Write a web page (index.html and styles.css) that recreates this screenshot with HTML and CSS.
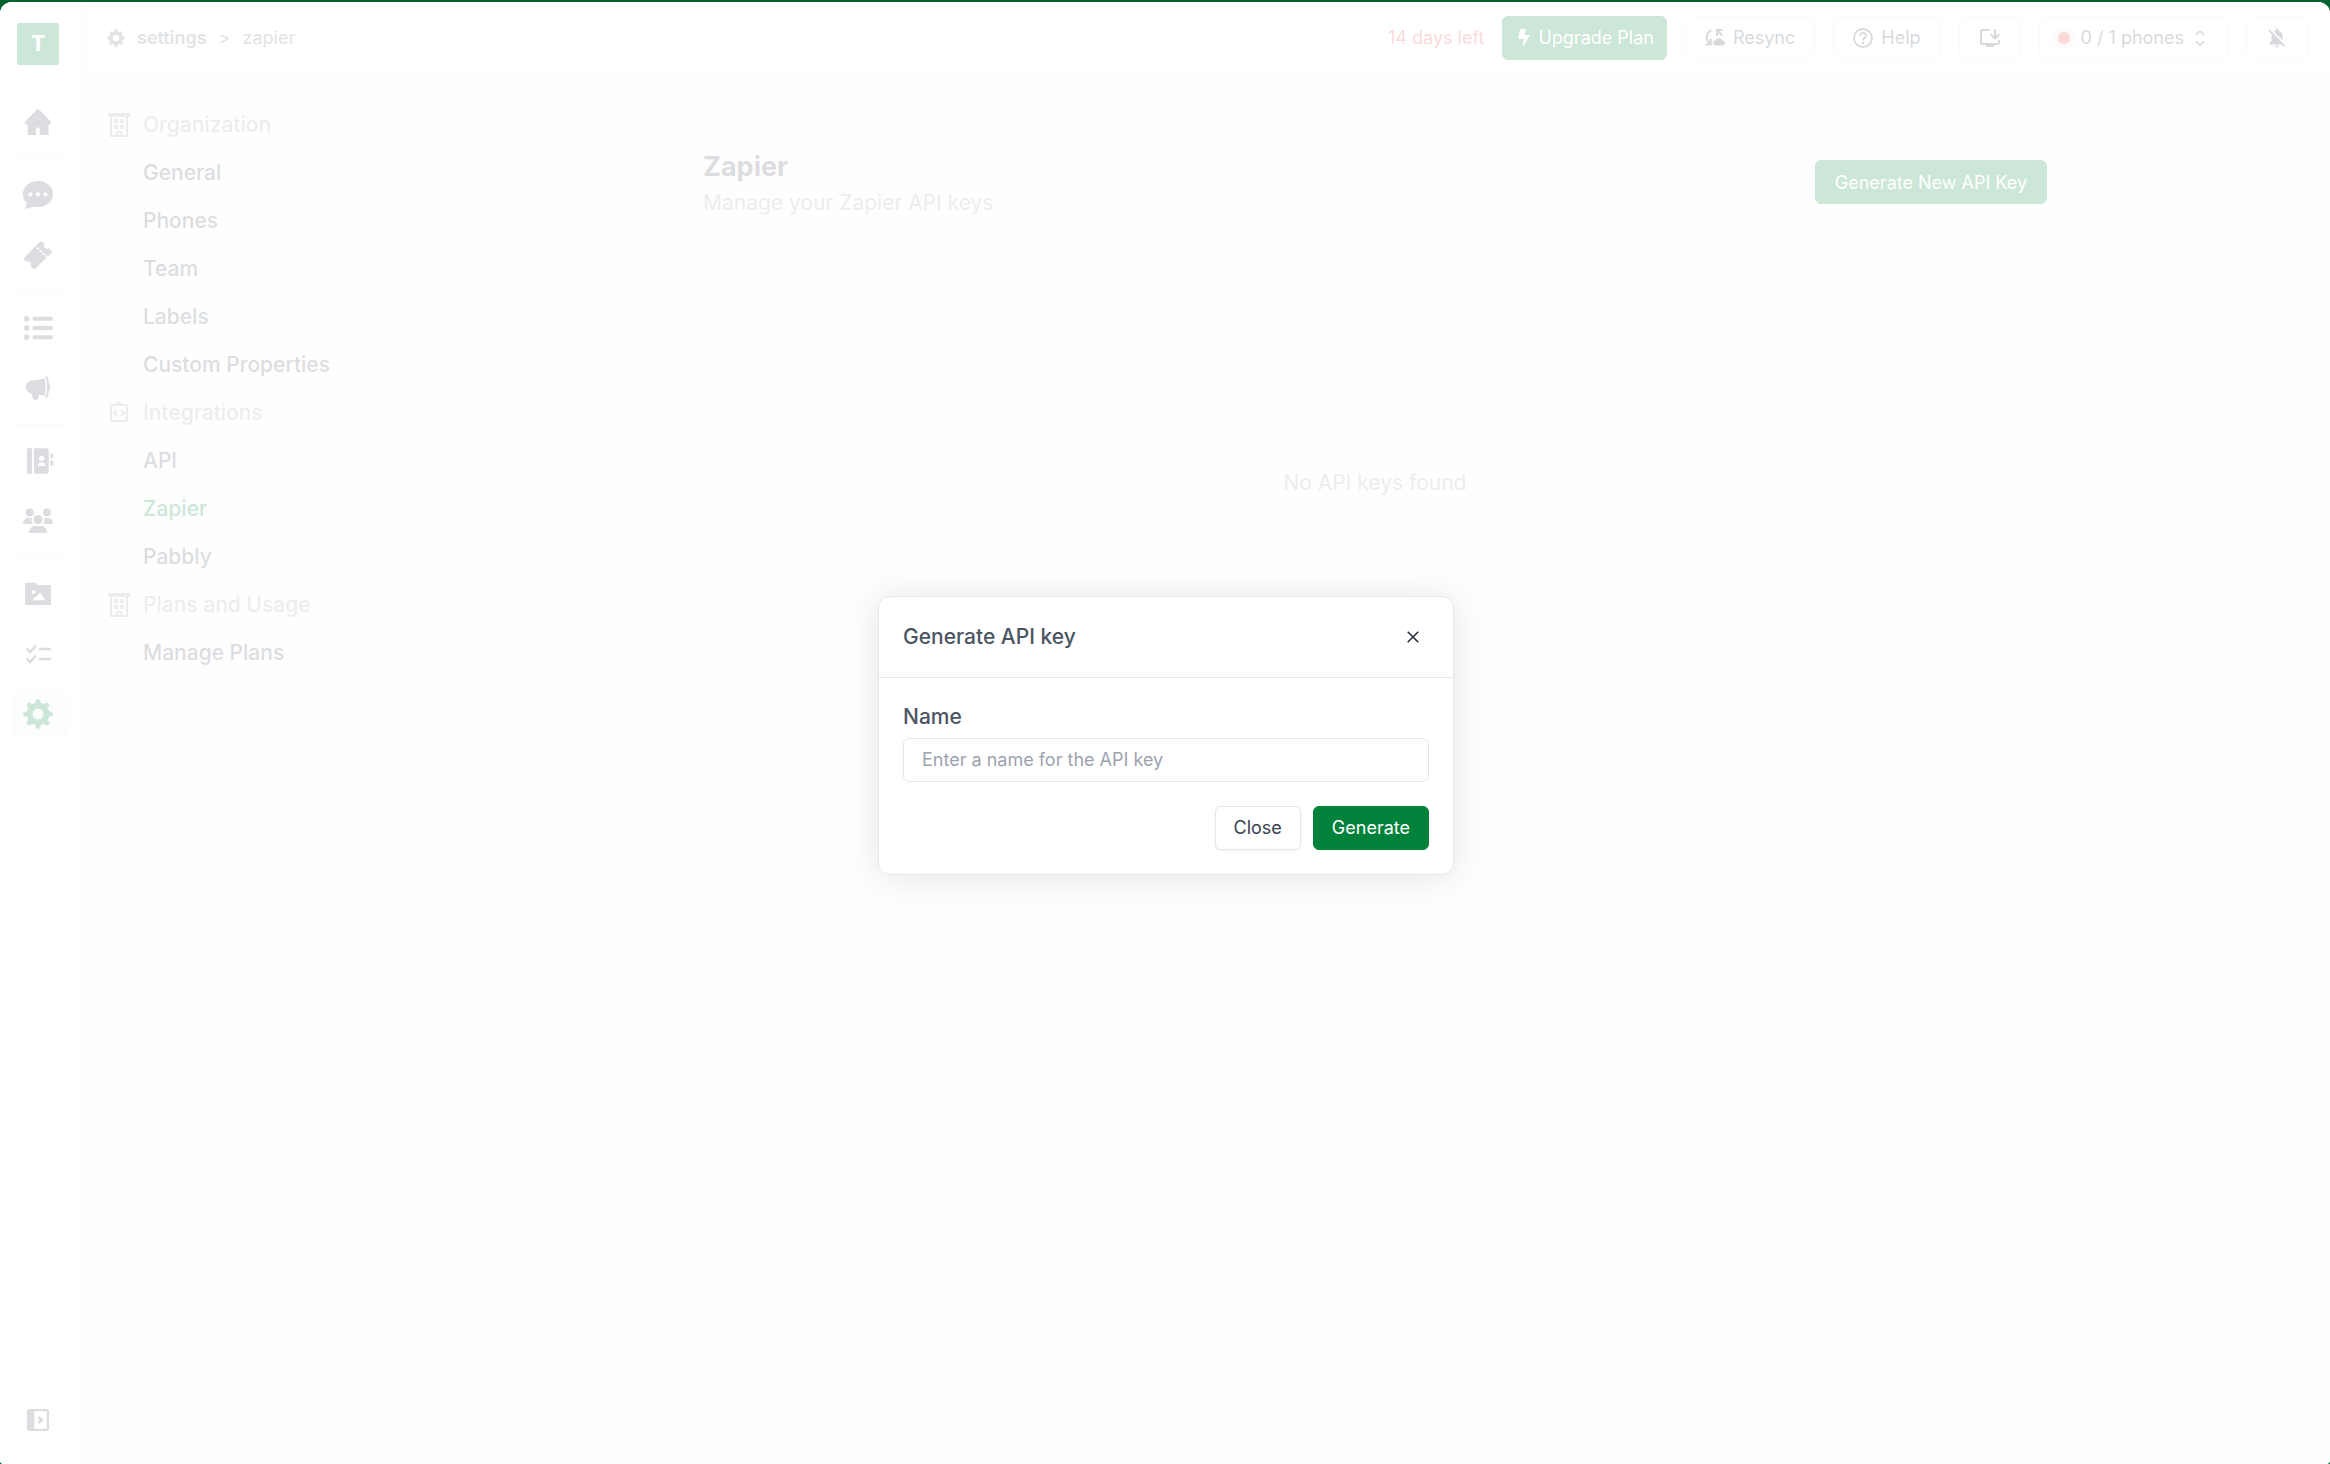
FILE: index.html
```html
<!DOCTYPE html>
<html lang="en">
<head>
    <meta charset="UTF-8">
    <meta name="viewport" content="width=device-width, initial-scale=1.0">
    <title>Zapier - Settings</title>
    <link rel="stylesheet" href="styles.css">
</head>
<body>
    <!-- shared icons -->
    <svg class="sprite" aria-hidden="true">
        <symbol id="gear" viewBox="0 0 30 30">
            <circle cx="15" cy="15" r="8.400" fill="none" stroke="currentColor" stroke-width="5.800"/>
            <path d="M15 2.7V6M15 27.3V24M2.7 15H6M27.3 15H24M6.3 6.3l2 2M23.7 6.3l-2 2M6.3 23.7l2-2M23.7 23.7l-2-2" stroke="currentColor" stroke-width="5" stroke-linecap="round"/>
        </symbol>
        <symbol id="building" viewBox="0 0 24 24">
            <path fill="currentColor" fill-rule="evenodd" d="M1 0h22v4h-2v20H3V4H1zM5 4v18h4v-4h6v4h4V4zM7 6h4v4H7zM13 6h4v4h-4zM7 12h4v4H7zM13 12h4v4h-4zM11 20v2h2v-2z"/>
        </symbol>
    </svg>

    <div class="app">
        <aside class="sidebar">
            <a href="#" class="logo">T</a>
            <nav class="menu" aria-label="Main">
                <a href="#" class="menu-item" aria-label="Home">
                    <svg class="menu-icon" viewBox="0 0 30 30"><path fill="currentColor" d="M14 2.6a1.5 1.5 0 0 1 2 0l11.6 11.6c.8.8.4 3.2-1 3.2h-1.1v9.8a.8.8 0 0 1-.8.8h-8V22a1.7 1.7 0 0 0-3.6 0v6H5.5a.8.8 0 0 1-.8-.8v-9.8H3.4c-1.4 0-1.8-2.4-1-3.2z"/></svg>
                </a>
                <hr class="divider">
                <a href="#" class="menu-item" aria-label="Chats">
                    <svg class="menu-icon" viewBox="0 0 30 30"><g transform="translate(0 1)"><path fill="currentColor" d="M15 0c8.600 0 15 5.500 15 13s-6.600 13-15 13c-1.500 0-3-.2-4.300-.6-2.700.9-5.200 1.800-8 2.300-.6.100-.8-.4-.5-.9 1-1.500 1.500-3 1.300-5C1.200 19.500 0 16.500 0 13 0 5.500 6.400 0 15 0z"/><circle cx="7.500" cy="13.300" r="2" fill="#fff"/><circle cx="15" cy="13.300" r="2" fill="#fff"/><circle cx="22.500" cy="13.300" r="2" fill="#fff"/></g></svg>
                </a>
                <a href="#" class="menu-item" aria-label="Tickets">
                    <svg class="menu-icon" viewBox="0 0 30 30"><path fill="currentColor" d="M1.500 17.500 17 1.800q1.200-1 2.300 0l2.200 2.500q-1.200 2.500.3 3.800 1.500 1.200 4 .2l2.600 2.400q1 1.200 0 2.300L12.500 28.500q-1.200 1-2.300 0L7.500 26q1-2.500-.5-4-1.500-1.300-4-.5L1.200 19.800q-.8-1.200.3-2.300z"/><path d="m14 7.500 10 9.500" stroke="#fff" stroke-width="2" stroke-dasharray="2.400 1.600"/></svg>
                </a>
                <hr class="divider">
                <a href="#" class="menu-item" aria-label="Lists">
                    <svg class="menu-icon" viewBox="0 0 30 30"><g fill="currentColor"><circle cx="3.700" cy="5.700" r="2.700"/><circle cx="3.700" cy="15" r="2.700"/><circle cx="3.700" cy="24.300" r="2.700"/></g><path d="M11.500 5.700H28M11.500 15H28M11.500 24.300H28" stroke="currentColor" stroke-width="4" stroke-linecap="round"/></svg>
                </a>
                <a href="#" class="menu-item" aria-label="Broadcasts">
                    <svg class="menu-icon" viewBox="0 0 30 30"><path fill="currentColor" d="M9 7.500c4 0 8-.8 12.500-2.500 1.500 6 1.500 12 0 18-2-.7-4.300-1.200-6-1.400v2.400c0 3.500-4.500 4-5.500 1.200L8.500 20.500C5 20 3 17.500 3 14.200 3 10.500 5.500 7.500 9 7.500z"/><path fill="currentColor" d="M22.500 3.300c1-.6 1.700-.1 2 .8l1.600 6.200c1.500 2.600 1.500 5 0 7.400l-1.600 6.200c-.3.900-1 1.400-2 .8 2.200-7 2.200-14.400 0-21.400z"/></svg>
                </a>
                <hr class="divider">
                <a href="#" class="menu-item" aria-label="Contacts">
                    <svg class="menu-icon" viewBox="0 0 30 30"><path fill="currentColor" d="M4 2.200h5v25.600H4zM11 2.200h12.500a2.300 2.300 0 0 1 2.300 2.300v21a2.300 2.300 0 0 1-2.300 2.300H11zM27.300 7.500H30v4.700h-2.700zM27.300 14.700H30v5h-2.700z"/><g fill="#fff"><circle cx="18.700" cy="12.300" r="2.600"/><path d="M15 20v-.5c0-4.500 7.500-4.500 7.500 0v.5z"/></g></svg>
                </a>
                <a href="#" class="menu-item" aria-label="Groups">
                    <svg class="menu-icon" viewBox="0 0 30 30"><g fill="currentColor"><circle cx="6.700" cy="6.600" r="4"/><circle cx="24" cy="6.600" r="4"/><circle cx="15" cy="13.500" r="4.500"/><path d="M0 18c0-4 2.500-6 5-6h4c-.8 2.300-.4 4.400 1 6zM30 18c0-4-2.500-6-5-6h-4c.8 2.300.4 4.400-1 6zM6 27c0-4.500 2.500-7 6-7h6c3.500 0 6 2.500 6 7z"/></g></svg>
                </a>
                <hr class="divider">
                <a href="#" class="menu-item" aria-label="Media">
                    <svg class="menu-icon" viewBox="0 0 30 30"><path fill="currentColor" d="M3 3.700h9.500l2.300 2.300H27a1 1 0 0 1 1 1v18a1 1 0 0 1-1 1H3a1 1 0 0 1-1-1V4.700a1 1 0 0 1 1-1z"/><circle cx="10.500" cy="13" r="2" fill="#fff"/><path fill="#fff" d="m9 21.300 8.300-7.500 5 7.500z"/></svg>
                </a>
                <a href="#" class="menu-item" aria-label="Tasks">
                    <svg class="menu-icon" viewBox="0 0 30 30"><path d="m3.500 9.500 3.700 3.500L13 6.500M3.500 19.500 7.200 23l5.800-6.500M16 10h12M16 20h12" fill="none" stroke="currentColor" stroke-width="2.400"/></svg>
                </a>
                <a href="#" class="menu-item active" aria-label="Settings">
                    <svg class="menu-icon"><use href="#gear"/></svg>
                </a>
            </nav>
            <button class="expand" aria-label="Expand sidebar">
                <svg class="menu-icon" viewBox="0 0 30 30"><rect x="4" y="4" width="22" height="22" rx="3" fill="currentColor"/><path fill="#fff" d="M11.300 6.300H23a.8.8 0 0 1 .8.8v15.800a.8.8 0 0 1-.8.8H11.300z"/><path d="m15.500 12 3.200 3-3.200 3" fill="none" stroke="currentColor" stroke-width="2.600"/></svg>
            </button>
        </aside>

        <header class="topbar">
            <div class="breadcrumb">
                <svg class="icon-18"><use href="#gear"/></svg>
                <a href="#" class="crumb-parent">settings</a>
                <span>&gt;</span>
                <span>zapier</span>
            </div>
            <div class="actions">
                <span class="trial">14 days left</span>
                <button class="btn btn-primary btn-upgrade">
                    <svg class="icon-bolt" viewBox="0 0 12 18"><path fill="currentColor" d="M2 0h6L6.500 6H12L5 18l.6-8H0z"/></svg>
                    Upgrade Plan
                </button>
                <button class="btn">
                    <svg class="icon-20" viewBox="0 0 20 20"><path d="M6.500 2C.5 5.500.5 12.500 5 15.500M.5 16.500h5.300V11M12 8V2h5.500M12 2l5 5.500" fill="none" stroke="currentColor" stroke-width="2"/><path fill="currentColor" d="M11.500 17.500c-4.500 0-4.300-5.200-.6-5.200.9-3.300 5.500-3 6.400.2 3.600.2 3.500 5 0 5z"/></svg>
                    Resync
                </button>
                <button class="btn">
                    <svg class="icon-20" viewBox="0 0 20 20"><circle cx="10" cy="10" r="9" fill="none" stroke="currentColor" stroke-width="1.800"/><path d="M7 7.800c0-4 6-4 6 0 0 2.200-3 2.300-3 4.700" fill="none" stroke="currentColor" stroke-width="1.800"/><path fill="currentColor" d="M9 14h2v2H9z"/></svg>
                    Help
                </button>
                <button class="btn btn-icon" aria-label="Install app">
                    <svg class="icon-20" viewBox="0 0 20 20"><path d="M9.500 2H2.500A1.500 1.500 0 0 0 1 3.500v11A1.500 1.500 0 0 0 2.500 16h15a1.500 1.500 0 0 0 1.500-1.500V12M15 1v9M10.800 6.300 15 10.500l4.200-4.200" fill="none" stroke="currentColor" stroke-width="2"/><path fill="currentColor" d="M6 16h8v3H6z"/></svg>
                </button>
                <button class="btn btn-phones">
                    <span class="status-dot"></span>
                    0 / 1 phones
                    <svg class="icon-chevrons" viewBox="0 0 10 16"><path d="m.7 5 4.300-4 4.300 4M.7 11 5 15l4.300-4" fill="none" stroke="currentColor" stroke-width="1.500"/></svg>
                </button>
                <button class="btn btn-icon" aria-label="Notifications off">
                    <svg class="icon-20" viewBox="0 0 20 20"><path fill="currentColor" d="M10 .5c1 0 1.500.7 1.500 1.500v.6c2.600.6 4 2.800 4 5.400v5l2 2v1.500h-15V15l2-2V8c0-2.600 1.400-4.800 4-5.400V2c0-.8.5-1.500 1.500-1.500zM8 17.500h4c0 2.500-4 2.500-4 0z"/><path d="m3 1 16 16.500" stroke="#fff" stroke-width="2"/><path d="m1.700 1.800 16 16.500" stroke="currentColor" stroke-width="1.700"/></svg>
                </button>
            </div>
        </header>

        <nav class="settings-nav" aria-label="Settings">
            <h2 class="nav-title"><svg class="nav-icon"><use href="#building"/></svg>Organization</h2>
            <a href="#" class="nav-link">General</a>
            <a href="#" class="nav-link">Phones</a>
            <a href="#" class="nav-link">Team</a>
            <a href="#" class="nav-link">Labels</a>
            <a href="#" class="nav-link">Custom Properties</a>
            <h2 class="nav-title">
                <svg class="nav-icon" viewBox="0 0 24 24"><path d="M5 4h14a1 1 0 0 1 1 1v14a1 1 0 0 1-1 1H5a1 1 0 0 1-1-1V5a1 1 0 0 1 1-1zM9.800 9.200 7 12l2.800 2.800M14.200 9.200 17 12l-2.800 2.800M9.500 3.500c.5-2 4.500-2 5 0" fill="none" stroke="currentColor" stroke-width="2"/></svg>
                Integrations
            </h2>
            <a href="#" class="nav-link">API</a>
            <a href="#" class="nav-link active">Zapier</a>
            <a href="#" class="nav-link">Pabbly</a>
            <h2 class="nav-title"><svg class="nav-icon"><use href="#building"/></svg>Plans and Usage</h2>
            <a href="#" class="nav-link">Manage Plans</a>
        </nav>

        <main class="content">
            <div class="page-head">
                <div>
                    <h1>Zapier</h1>
                    <p>Manage your Zapier API keys</p>
                </div>
                <button class="btn btn-primary">Generate New API Key</button>
            </div>
            <p class="empty">No API keys found</p>
        </main>

        <div class="overlay">
            <form class="modal" role="dialog" aria-labelledby="modal-title">
                <div class="modal-head">
                    <h2 id="modal-title">Generate API key</h2>
                    <button type="button" class="modal-x" aria-label="Close dialog">
                        <svg viewBox="0 0 12 12"><path d="m.7.7 10.600 10.600M11.300.7.7 11.300" stroke="currentColor" stroke-width="1.500"/></svg>
                    </button>
                </div>
                <div class="modal-body">
                    <label for="key-name">Name</label>
                    <input type="text" id="key-name" placeholder="Enter a name for the API key">
                    <div class="modal-actions">
                        <button type="button" class="btn btn-close">Close</button>
                        <button type="submit" class="btn btn-primary">Generate</button>
                    </div>
                </div>
            </form>
        </div>
    </div>
</body>
</html>
```
FILE: styles.css
```css
* {
    box-sizing: border-box;
}

body {
    margin: 0;
    padding-top: 2px;
    height: 100vh;
    background-color: #02612e;
    font-family: Inter, sans-serif;
    font-size: 21px;
    line-height: 30px;
    color: #4b5563;
}

h1, h2, p {
    margin: 0;
}

a {
    color: inherit;
    text-decoration: none;
}

button, input {
    font-family: inherit;
}

svg {
    display: block;
    flex-shrink: 0;
}

.sprite {
    position: absolute;
    width: 0;
    height: 0;
}

.app {
    position: relative;
    display: grid;
    grid-template-columns: 83px 337px 1fr;
    grid-template-rows: 72px 1fr;
    height: 100%;
    background-color: #f9fafb;
    border-radius: 12px 12px 4px 4px;
    overflow: hidden;
}

/* left icon bar */
.sidebar {
    grid-row: 1 / 3;
    display: flex;
    flex-direction: column;
    padding: 21px 12px 20px 11px;
    background-color: #fff;
    border-right: 1px solid #e5e7eb;
}

.logo {
    width: 42px;
    height: 42px;
    margin: 0 0 33px 6px;
    border-radius: 3px;
    background-color: #00823b;
    color: #fff;
    font-size: 21px;
    font-weight: 800;
    line-height: 42px;
    text-align: center;
}

.menu {
    display: flex;
    flex-direction: column;
    gap: 12px;
}

.menu-item {
    display: flex;
    align-items: center;
    height: 48px;
    padding-left: 12px;
    border-radius: 9px;
}

.menu-item.active {
    background-color: #e8fbf0;
    color: #00823b;
}

.menu-icon {
    width: 30px;
    height: 30px;
}

.divider {
    width: 100%;
    margin: 0;
    border: 0;
    border-top: 1px solid #e5e7eb;
}

.expand {
    display: flex;
    align-items: center;
    height: 48px;
    margin-top: auto;
    padding: 0 0 0 12px;
    border: 0;
    background: none;
    color: #4b5563;
}

/* top bar */
.topbar {
    grid-column: 2 / 4;
    display: flex;
    align-items: center;
    justify-content: space-between;
    padding: 0 22px 0 24px;
    background-color: #fff;
    border-bottom: 1px solid #e5e7eb;
}

.breadcrumb {
    display: flex;
    align-items: center;
    gap: 12px;
    font-size: 18px;
    color: #6b7280;
}

.crumb-parent {
    font-weight: 600;
}

.icon-18 {
    width: 18px;
    height: 18px;
}

.icon-20 {
    width: 20px;
    height: 20px;
}

.icon-bolt {
    width: 12px;
    height: 18px;
}

.icon-chevrons {
    width: 10px;
    height: 16px;
}

.actions {
    display: flex;
    align-items: center;
    gap: 18px;
}

.trial {
    font-size: 18px;
    color: #ef4444;
}

.btn {
    display: flex;
    align-items: center;
    gap: 8px;
    height: 44px;
    padding: 0 19px;
    border: 1px solid #e5e7eb;
    border-radius: 6px;
    background-color: #fff;
    color: #374151;
    font-size: 18px;
    white-space: nowrap;
}

.btn-primary {
    border-color: #00823b;
    background-color: #00823b;
    color: #fff;
}

.btn-upgrade {
    padding: 0 12px 0 15px;
}

.btn-icon {
    padding: 0 20px;
}

.btn-phones {
    gap: 11px;
    padding: 0 22px 0 18px;
}

.status-dot {
    width: 12px;
    height: 12px;
    border-radius: 50%;
    background-color: #ef4444;
    box-shadow: 0 0 10px #f87171;
}

/* settings menu */
.settings-nav {
    display: flex;
    flex-direction: column;
    gap: 6px;
    padding: 30px 26px 0 24px;
    border-right: 1px solid #e5e7eb;
}

.nav-title {
    display: flex;
    align-items: center;
    gap: 12px;
    height: 42px;
    color: #9ca3af;
    font-size: 21px;
    font-weight: 500;
}

.nav-icon {
    width: 24px;
    height: 24px;
}

.nav-link {
    height: 42px;
    margin-left: 24px;
    padding-left: 12px;
    border-radius: 9px;
    font-weight: 500;
    line-height: 42px;
}

.nav-link.active {
    background-color: #e8fbf0;
    color: #00823b;
}

/* page */
.content {
    width: 100%;
    max-width: 1344px;
    margin: 0 auto;
    padding-top: 72px;
}

.page-head {
    display: flex;
    align-items: center;
    justify-content: space-between;
}

.page-head h1 {
    font-size: 27px;
    line-height: 42px;
}

.page-head p,
.empty {
    color: #9ca3af;
}

.empty {
    margin-top: 250px;
    text-align: center;
}

/* dialog */
.overlay {
    position: absolute;
    inset: 0;
    display: flex;
    align-items: center;
    justify-content: center;
    padding: 4px 0 0 2px;
    background-color: rgba(255, 255, 255, 0.8);
}

.modal {
    width: 576px;
    border: 1px solid #e5e7eb;
    border-radius: 12px;
    background-color: #fff;
    box-shadow: 0 2px 36px rgba(0, 0, 0, 0.1);
}

.modal-head {
    display: flex;
    align-items: center;
    justify-content: space-between;
    height: 81px;
    padding: 0 24px;
    border-bottom: 1px solid #e5e7eb;
}

.modal-head h2 {
    font-size: 21px;
    font-weight: 500;
}

.modal-x {
    padding: 10px;
    border: 0;
    background: none;
    color: #1f2937;
}

.modal-x svg {
    width: 12px;
    height: 12px;
}

.modal-body {
    display: flex;
    flex-direction: column;
    padding: 24px;
}

.modal-body label {
    margin-bottom: 6px;
    font-weight: 500;
}

.modal-body input {
    height: 44px;
    padding: 0 18px;
    border: 1px solid #e5e7eb;
    border-radius: 6px;
    color: #374151;
    font-size: 18px;
}

.modal-body input::placeholder {
    color: #9ca3af;
}

.modal-actions {
    display: flex;
    justify-content: flex-end;
    gap: 12px;
    margin-top: 24px;
}

.modal-actions .btn {
    padding: 0 18px;
}

.btn-close {
    box-shadow: 0 1px 3px rgba(0, 0, 0, 0.06);
}
```
